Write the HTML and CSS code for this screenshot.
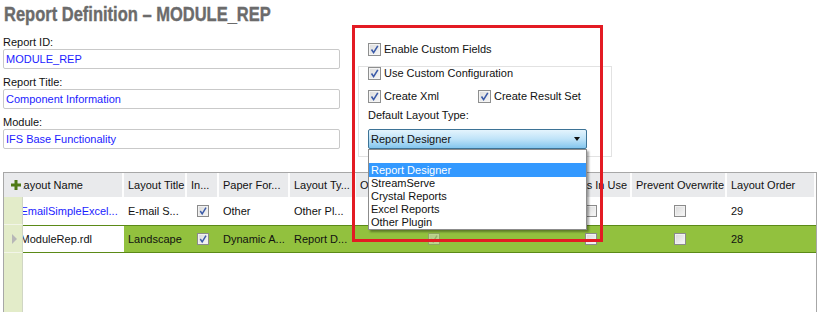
FILE: index.html
```html
<!DOCTYPE html>
<html lang="en">
<head>
    <meta charset="UTF-8">
    <title>Report Definition - MODULE_REP</title>
    <link rel="stylesheet" href="styles.css">
</head>
<body>
    <div class="page">
        <h1 class="title"><span>Report Definition – MODULE_REP</span></h1>

        <div class="top">
            <div class="form">
                <div class="field-label">Report ID:</div>
                <div class="field">MODULE_REP</div>
                <div class="field-label">Report Title:</div>
                <div class="field">Component Information</div>
                <div class="field-label">Module:</div>
                <div class="field">IFS Base Functionality</div>
            </div>

            <div class="options">
                <div class="check-row first">
                    <span class="cb"><svg viewBox="0 0 11 11"><path d="M2.5 5.5 L4.6 8.6 L8.8 1.8" /></svg></span>
                    Enable Custom Fields
                </div>
                <div class="group">
                    <div class="check-row">
                        <span class="cb"><svg viewBox="0 0 11 11"><path d="M2.5 5.5 L4.6 8.6 L8.8 1.8" /></svg></span>
                        Use Custom Configuration
                    </div>
                    <div class="check-pair">
                        <div class="check-row wide">
                            <span class="cb"><svg viewBox="0 0 11 11"><path d="M2.5 5.5 L4.6 8.6 L8.8 1.8" /></svg></span>
                            Create Xml
                        </div>
                        <div class="check-row">
                            <span class="cb"><svg viewBox="0 0 11 11"><path d="M2.5 5.5 L4.6 8.6 L8.8 1.8" /></svg></span>
                            Create Result Set
                        </div>
                    </div>
                    <div class="group-label">Default Layout Type:</div>
                    <div class="select">
                        <span>Report Designer</span>
                        <span class="arrow"></span>
                        <ul class="select-list">
                            <li>&nbsp;</li>
                            <li class="active">Report Designer</li>
                            <li>StreamServe</li>
                            <li>Crystal Reports</li>
                            <li>Excel Reports</li>
                            <li>Other Plugin</li>
                        </ul>
                    </div>
                </div>
            </div>
        </div>

        <div class="grid">
            <div class="row head">
                <div class="rh">
                    <svg class="plus" viewBox="0 0 10 10"><rect x="3.5" y="0" width="3" height="10" /><rect x="0" y="3.5" width="10" height="3" /></svg>
                </div>
                <div class="cell name">Layout Name</div>
                <div class="cell">Layout Title</div>
                <div class="cell">In...</div>
                <div class="cell">Paper For...</div>
                <div class="cell">Layout Ty...</div>
                <div class="cell">Orientation</div>
                <div class="cell">Valid</div>
                <div class="cell right">Is In Use</div>
                <div class="cell">Prevent Overwrite</div>
                <div class="cell">Layout Order</div>
            </div>

            <div class="row">
                <div class="rh"></div>
                <div class="cell name link">EmailSimpleExcel...</div>
                <div class="cell">E-mail S...</div>
                <div class="cell center"><span class="gcb"><svg viewBox="0 0 11 11"><path d="M2.5 5.5 L4.6 8.6 L8.8 1.8" /></svg></span></div>
                <div class="cell">Other</div>
                <div class="cell">Other Pl...</div>
                <div class="cell center"><span class="gcb"></span></div>
                <div class="cell"></div>
                <div class="cell center"><span class="gcb"></span></div>
                <div class="cell center"><span class="gcb"></span></div>
                <div class="cell">29</div>
            </div>

            <div class="row selected">
                <div class="rh"><span class="pointer"></span></div>
                <div class="cell name current">ModuleRep.rdl</div>
                <div class="cell">Landscape</div>
                <div class="cell center"><span class="gcb"><svg viewBox="0 0 11 11"><path d="M2.5 5.5 L4.6 8.6 L8.8 1.8" /></svg></span></div>
                <div class="cell">Dynamic A...</div>
                <div class="cell">Report D...</div>
                <div class="cell center"><span class="gcb disabled"><svg viewBox="0 0 11 11"><path d="M2.5 5.5 L4.6 8.6 L8.8 1.8" /></svg></span></div>
                <div class="cell"></div>
                <div class="cell center"><span class="gcb"></span></div>
                <div class="cell center"><span class="gcb"></span></div>
                <div class="cell">28</div>
            </div>

            <div class="row empty">
                <div class="rh"></div>
            </div>
        </div>

        <div class="highlight"></div>
    </div>
</body>
</html>
```

FILE: styles.css
```css
* {
    margin: 0;
    padding: 0;
    box-sizing: border-box;
}

html, body {
    overflow: hidden;
}

body {
    font-family: 'Liberation Sans', Arial, sans-serif;
    font-size: 11px;
    color: #111;
    background: white;
}

.page {
    position: relative;
    width: 827px;
    height: 312px;
    overflow: hidden;
}

.title {
    padding: 2px 0 0 4px;
    height: 26px;
    font-size: 20px;
    line-height: 24px;
    font-weight: bold;
    color: #6b6b6b;
    white-space: nowrap;
}

.title span {
    display: inline-block;
    transform: scaleX(0.825);
    transform-origin: left center;
    -webkit-text-stroke: 0.4px #6b6b6b;
}

/* top area */

.top {
    display: flex;
    gap: 18px;
    padding-left: 3px;
}

.form {
    width: 337px;
    padding-top: 10px;
}

.field-label {
    height: 13px;
    line-height: 13px;
}

.field {
    height: 20px;
    margin-bottom: 7px;
    padding-left: 2px;
    line-height: 18px;
    color: #1c1cff;
    border: 1px solid #c9c9c9;
    border-radius: 2px;
}

.options {
    width: 254px;
}

.check-row {
    display: flex;
    align-items: center;
    height: 13px;
    line-height: 13px;
    white-space: nowrap;
}

.check-row.first {
    margin: 17px 0 10px 10px;
}

.check-row.wide {
    width: 110px;
}

.cb {
    width: 13px;
    height: 13px;
    margin-right: 3px;
    border: 1px solid #8e8f8f;
    background: linear-gradient(135deg, #dcdcdc, #f6f6f6);
    box-shadow: inset 0 0 0 1px #f4f4f4;
    flex-shrink: 0;
}

.cb svg,
.gcb svg {
    display: block;
    width: 100%;
    height: 100%;
}

.cb path,
.gcb path {
    fill: none;
    stroke: #3a5aa8;
    stroke-width: 1.6;
}

.group {
    height: 91px;
    padding-left: 9px;
    border: 1px solid #e2e2e2;
}

.check-pair {
    display: flex;
    margin-top: 10px;
}

.group-label {
    margin-top: 6px;
    height: 13px;
    line-height: 13px;
}

.select {
    position: relative;
    display: flex;
    align-items: center;
    justify-content: space-between;
    margin-top: 7px;
    width: 219px;
    height: 20px;
    padding: 0 6px 0 2px;
    border: 1px solid #3d7396;
    border-radius: 2px;
    background: linear-gradient(#e4f4fd, #bfe3f8 50%, #84c6ee);
    color: #111;
}

.arrow {
    width: 0;
    height: 0;
    border-left: 3.5px solid transparent;
    border-right: 3.5px solid transparent;
    border-top: 4px solid #111;
}

.select-list {
    position: absolute;
    top: 19px;
    left: -1px;
    width: 219px;
    list-style: none;
    background: white;
    border: 1px solid #8c8c8c;
    box-shadow: 2px 2px 2px rgba(0, 0, 0, 0.35);
    z-index: 2;
}

.select-list li {
    height: 13px;
    line-height: 13px;
    padding-left: 2px;
}

.select-list li.active {
    height: 14px;
    line-height: 14px;
    background: #3399ff;
    color: white;
}

/* layout grid */

.grid {
    margin: 15px 0 0 3px;
    width: 814px;
    height: 140px;
    border: 1px solid #a7a7a7;
    border-bottom: none;
    overflow: hidden;
    font-size: 11px;
    color: #111;
}

.row {
    display: grid;
    grid-template-columns: 19px 101px 63px 32px 71px 66px 156px 38px 82px 95px 89px;
    height: 28px;
    align-items: stretch;
}

.row.head {
    height: 24px;
    background: #e9eaec;
}

.row.empty {
    height: 87px;
}

.rh {
    display: flex;
    align-items: center;
    justify-content: center;
    background: #e3ecc9;
    border-right: 1px solid #d0d6c4;
    border-bottom: 1px solid #f2f5e8;
}

.head .rh {
    background: #e9eaec;
    border-right: none;
    border-bottom: none;
}

.plus {
    width: 10px;
    height: 10px;
    margin-left: 5px;
    fill: #4f7a16;
}

.pointer {
    width: 0;
    height: 0;
    margin-left: 2px;
    border-left: 5px solid #b7b7b7;
    border-top: 5px solid transparent;
    border-bottom: 5px solid transparent;
}

.cell {
    display: block;
    padding: 0 0 0 4px;
    overflow: hidden;
    white-space: nowrap;
    line-height: 28px;
}

.head .cell {
    line-height: 24px;
    background: linear-gradient(to left, #fdfdfd 2px, transparent 2px);
}

.head .cell.right {
    text-align: right;
    padding-right: 5px;
}

.cell.name {
    padding-left: 0;
    text-indent: -2.5px;
}

.head .cell.name {
    text-indent: -5.5px;
}

.cell.link {
    color: #1c1cff;
}

.cell.center {
    display: flex;
    align-items: center;
    justify-content: center;
    padding: 0;
}

.row.selected .cell {
    background: #92c13e;
    border-top: 1px solid #5b8a17;
    border-bottom: 1px solid #5b8a17;
    line-height: 26px;
}

.row.selected .cell.current {
    background: white;
}

.gcb {
    display: block;
    width: 12px;
    height: 12px;
    border: 1px solid #8b8b8b;
    background: linear-gradient(135deg, #d9d9d9, #f8f8f8);
    box-shadow: inset 0 0 0 1px #f1f1f1;
}

.gcb.disabled {
    opacity: 0.45;
}

.gcb.disabled path {
    stroke: #9a9a9a;
}

/* red annotation frame */

.highlight {
    position: absolute;
    left: 352px;
    top: 25px;
    width: 251px;
    height: 217px;
    border: 3px solid #e31b23;
    pointer-events: none;
    z-index: 3;
}
```
